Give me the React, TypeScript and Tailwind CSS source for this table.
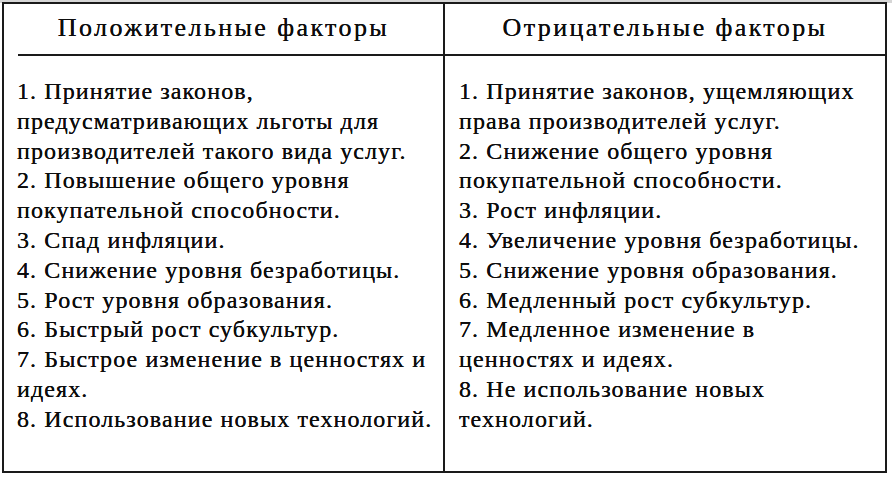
const positive = [
  '1. Принятие законов,',
  'предусматривающих льготы для',
  'производителей такого вида услуг.',
  '2. Повышение общего уровня',
  'покупательной способности.',
  '3. Спад инфляции.',
  '4. Снижение уровня безработицы.',
  '5. Рост уровня образования.',
  '6. Быстрый рост субкультур.',
  '7. Быстрое изменение в ценностях и',
  'идеях.',
  '8. Использование новых технологий.',
];

const negative = [
  '1. Принятие законов, ущемляющих',
  'права производителей услуг.',
  '2. Снижение общего уровня',
  'покупательной способности.',
  '3. Рост инфляции.',
  '4. Увеличение уровня безработицы.',
  '5. Снижение уровня образования.',
  '6. Медленный рост субкультур.',
  '7. Медленное изменение в',
  'ценностях и идеях.',
  '8. Не использование новых',
  'технологий.',
];

function Lines({ items }: { items: string[] }) {
  return (
    <div className="flex flex-col">
      {items.map((line, i) => (
        <div key={i} className="whitespace-nowrap leading-[29.8px] h-[29.8px]">{line}</div>
      ))}
    </div>
  );
}

export default function App() {
  return (
    <div
      className="w-[892px] h-[478px] bg-white text-[#0d0d0d] overflow-hidden [text-shadow:0_0_0.5px_#000]"
      style={{ fontFamily: '"Liberation Serif", "Times New Roman", serif' }}
    >
      <div className="h-[3px] bg-[#d6d6d6]" />
      <div className="ml-[2px] w-[885px] h-[471px] border-2 border-[#1a1a1a] -mt-[1px] grid grid-cols-[441px_1fr]">
        <div className="flex flex-col border-r-2 border-[#1a1a1a]">
          <div className="h-[52px] ml-[14px] border-b-2 border-[#1a1a1a] flex items-center justify-center pr-[14px] pb-[3px] text-[26px] tracking-[2.4px]">
            Положительные факторы
          </div>
          <div className="pl-[13px] pt-[21px] text-[24px] tracking-[1.1px]">
            <Lines items={positive} />
          </div>
        </div>
        <div className="flex flex-col">
          <div className="h-[52px] border-b-2 border-[#1a1a1a] flex items-center justify-center pb-[3px] text-[26px] tracking-[2.4px]">
            Отрицательные факторы
          </div>
          <div className="pl-[14px] pt-[21px] text-[24px] tracking-[1.1px]">
            <Lines items={negative} />
          </div>
        </div>
      </div>
    </div>
  );
}
